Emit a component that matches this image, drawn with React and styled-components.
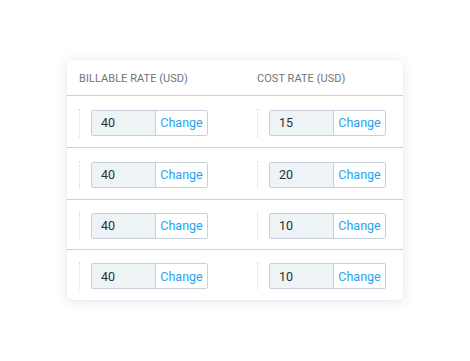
import React from "react";
import styled, { createGlobalStyle } from "styled-components";

const Global = createGlobalStyle`
  html, body { margin: 0; padding: 0; background: #ffffff; }
  body { font-family: Roboto, "Liberation Sans", Arial, sans-serif; }
`;

const Page = styled.div`
  width: 470px;
  height: 361px;
  padding: 60px 0 0 67px;
  box-sizing: border-box;
`;

const Card = styled.div`
  width: 336px;
  background: #fff;
  border-radius: 5px;
  box-shadow: 0 2px 14px rgba(40, 50, 70, 0.11), 0 0 2px rgba(40, 50, 70, 0.06);
  overflow: hidden;
`;

const Row = styled.div`
  display: grid;
  grid-template-columns: 178px 1fr;
  height: ${(p) => p.$h}px;
  border-top: ${(p) => (p.$first ? "none" : "1px solid #cbd3da")};
  align-items: center;
`;

const HeadCell = styled.div`
  padding-left: 12px;
  font-size: 11px;
  color: #6f7479;
  letter-spacing: 0.05px;
  text-transform: uppercase;
  padding-top: 2px;
`;

const Cell = styled.div`
  display: flex;
  align-items: center;
  padding-left: 12px;
  padding-top: 2px;
`;

const Dots = styled.div`
  width: 0;
  height: 28px;
  border-left: 1px dotted #d6dade;
  margin-right: 11px;
`;

const Group = styled.div`
  display: flex;
  width: 117px;
  height: 26px;
  box-sizing: border-box;
  border: 1px solid #c6d1db;
  border-radius: 2px;
  overflow: hidden;
`;

const Value = styled.div`
  width: 64px;
  background: #eef3f6;
  border-right: 1px solid #c6d1db;
  font-size: 12.5px;
  color: #2b2f33;
  display: flex;
  align-items: center;
  padding-left: 9px;
  box-sizing: border-box;
`;

const ChangeBtn = styled.button`
  flex: 1;
  border: none;
  background: #fff;
  color: #1ea4f0;
  font-family: Roboto, "Liberation Sans", Arial, sans-serif;
  font-size: 12.5px;
  padding: 0;
  display: flex;
  align-items: center;
  justify-content: center;
  cursor: pointer;
`;

const rows = [
  { billable: 40, cost: 15, h: 51 },
  { billable: 40, cost: 20, h: 51 },
  { billable: 40, cost: 10, h: 49 },
  { billable: 40, cost: 10, h: 50 },
];

function RateInput({ value }) {
  return (
    <Cell>
      <Dots />
      <Group>
        <Value>{value}</Value>
        <ChangeBtn>Change</ChangeBtn>
      </Group>
    </Cell>
  );
}

export default function App() {
  return (
    <>
      <Global />
      <Page>
        <Card>
          <Row $h={35} $first>
            <HeadCell>Billable rate (USD)</HeadCell>
            <HeadCell>Cost rate (USD)</HeadCell>
          </Row>
          {rows.map((r, i) => (
            <Row key={i} $h={r.h}>
              <RateInput value={r.billable} />
              <RateInput value={r.cost} />
            </Row>
          ))}
        </Card>
      </Page>
    </>
  );
}
